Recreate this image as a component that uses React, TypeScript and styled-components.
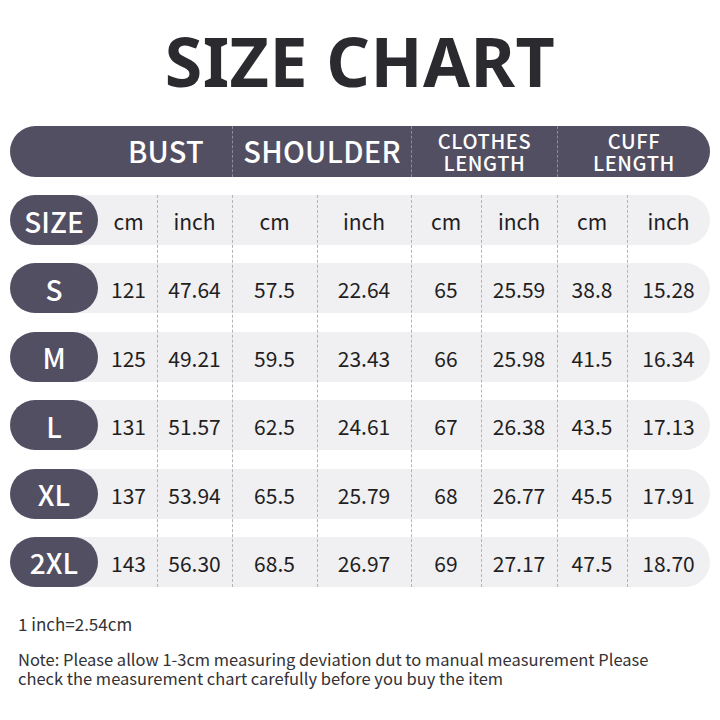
import React from "react";
import styled, { createGlobalStyle } from "styled-components";

const Global = createGlobalStyle`
  html, body { margin: 0; padding: 0; background: #ffffff; }
  body { width: 720px; height: 720px; overflow: hidden; font-family: "Noto Sans CJK SC", "Noto Sans", sans-serif; }
`;

const COLS = "90px 57px 75px 85px 94px 70px 76px 70px 83px";
const DARK = "#534f63";
const BAND = "#f0eff1";

const Page = styled.div`
  width: 720px;
  height: 720px;
  display: flex;
  flex-direction: column;
`;

const Title = styled.h1`
  margin: 27px 0 0;
  font-family: "Noto Sans", sans-serif;
  font-weight: 700;
  font-size: 68px;
  line-height: 68px;
  color: #2b2a2e;
  text-align: center;
  letter-spacing: 0.5px;
`;

const Table = styled.div`
  margin: 31px 10px 0;
  width: 700px;
  display: flex;
  flex-direction: column;
  gap: 18px;
`;

const HeaderBar = styled.div`
  display: grid;
  grid-template-columns: ${COLS};
  height: 51px;
  background: ${DARK};
  border-radius: 26px;
  color: #ffffff;
`;

const GroupHead = styled.div<{ $from: number; $to: number; $divider?: boolean; $small?: boolean }>`
  grid-column: ${(p) => p.$from} / ${(p) => p.$to};
  display: flex;
  flex-direction: column;
  align-items: center;
  justify-content: center;
  text-align: center;
  font-weight: 500;
  font-size: ${(p) => (p.$small ? "20px" : "29px")};
  line-height: ${(p) => (p.$small ? "22px" : "30px")};
  letter-spacing: ${(p) => (p.$small ? "0.6px" : "0.3px")};
  border-left: ${(p) => (p.$divider ? "1px dashed rgba(255,255,255,0.35)" : "none")};
  padding-bottom: ${(p) => (p.$small ? "0" : "3px")};
`;

const HeadLine = styled.span`
  display: block;
  height: 22px;
`;

const Body = styled.div`
  display: grid;
  grid-template-columns: ${COLS};
  grid-template-rows: repeat(6, 50px);
  row-gap: 18.4px;
`;

const Band = styled.div<{ $row: number }>`
  grid-column: 1 / -1;
  grid-row: ${(p) => p.$row};
  background: ${BAND};
  border-radius: 25px;
`;

const Divider = styled.div<{ $col: number }>`
  grid-column: ${(p) => p.$col};
  grid-row: 1 / -1;
  border-left: 1px dashed #b4b3b8;
  pointer-events: none;
`;

const Pill = styled.div<{ $row: number }>`
  grid-column: 1;
  grid-row: ${(p) => p.$row};
  width: 88px;
  background: ${DARK};
  border-radius: 25px;
  color: #ffffff;
  display: flex;
  align-items: center;
  justify-content: center;
  font-size: 28px;
  font-weight: 500;
  padding-top: 1px;
  box-sizing: border-box;
`;

const Cell = styled.div<{ $row: number; $col: number }>`
  grid-column: ${(p) => p.$col};
  grid-row: ${(p) => p.$row};
  display: flex;
  align-items: center;
  justify-content: center;
  font-size: 21px;
  color: #1f1e22;
  padding-top: 2px;
`;

const Notes = styled.div`
  margin: 27px 0 0 18px;
  width: 650px;
  color: #333236;
  font-size: 16.5px;
  line-height: 19px;
`;

const Conversion = styled.p`
  margin: 0 0 17px;
  font-size: 17px;
`;

const NoteText = styled.p`
  margin: 0;
`;

const units = ["cm", "inch", "cm", "inch", "cm", "inch", "cm", "inch"];
const rows: [string, string[]][] = [
  ["S", ["121", "47.64", "57.5", "22.64", "65", "25.59", "38.8", "15.28"]],
  ["M", ["125", "49.21", "59.5", "23.43", "66", "25.98", "41.5", "16.34"]],
  ["L", ["131", "51.57", "62.5", "24.61", "67", "26.38", "43.5", "17.13"]],
  ["XL", ["137", "53.94", "65.5", "25.79", "68", "26.77", "45.5", "17.91"]],
  ["2XL", ["143", "56.30", "68.5", "26.97", "69", "27.17", "47.5", "18.70"]],
];

export default function App() {
  const all: [string, string[]][] = [["SIZE", units], ...rows];
  return (
    <Page>
      <Global />
      <Title>SIZE CHART</Title>
      <Table>
        <HeaderBar>
          <GroupHead $from={2} $to={4}>BUST</GroupHead>
          <GroupHead $from={4} $to={6} $divider>SHOULDER</GroupHead>
          <GroupHead $from={6} $to={8} $divider $small>
            <HeadLine>CLOTHES</HeadLine>
            <HeadLine>LENGTH</HeadLine>
          </GroupHead>
          <GroupHead $from={8} $to={10} $divider $small>
            <HeadLine>CUFF</HeadLine>
            <HeadLine>LENGTH</HeadLine>
          </GroupHead>
        </HeaderBar>
        <Body>
          {all.map((_, i) => (
            <Band key={`b${i}`} $row={i + 1} />
          ))}
          {[3, 4, 5, 6, 7, 8, 9].map((c) => (
            <Divider key={`d${c}`} $col={c} />
          ))}
          {all.map(([size, vals], i) => (
            <React.Fragment key={size}>
              <Pill $row={i + 1}>{size}</Pill>
              {vals.map((v, j) => (
                <Cell key={j} $row={i + 1} $col={j + 2}>
                  {v}
                </Cell>
              ))}
            </React.Fragment>
          ))}
        </Body>
      </Table>
      <Notes>
        <Conversion>1 inch=2.54cm</Conversion>
        <NoteText>
          Note: Please allow 1-3cm measuring deviation dut to manual measurement Please check the measurement
          chart carefully before you buy the item
        </NoteText>
      </Notes>
    </Page>
  );
}
